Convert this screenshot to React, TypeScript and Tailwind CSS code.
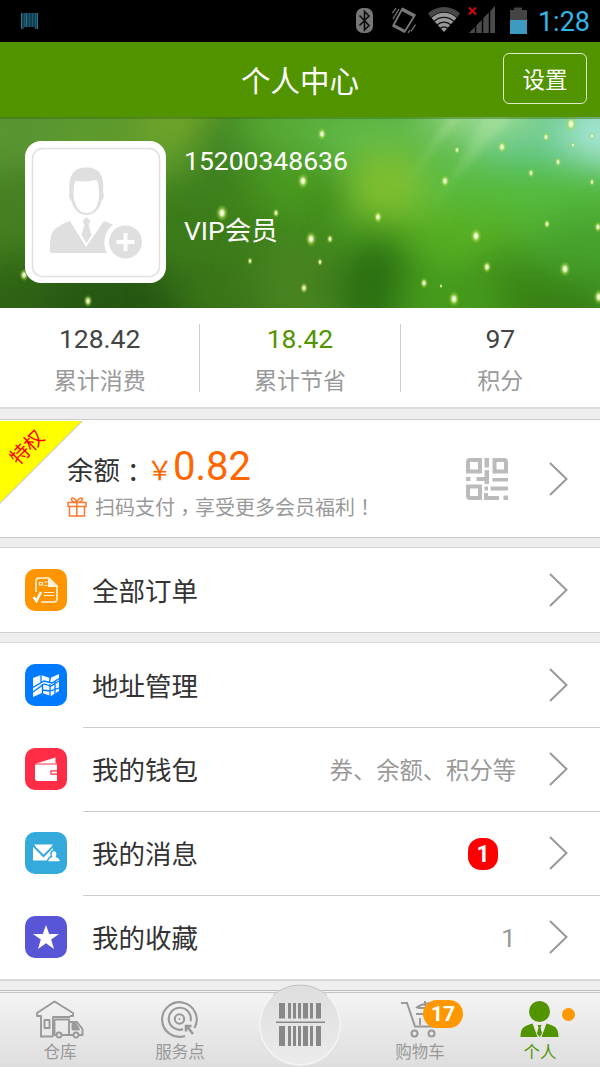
import type { ReactNode } from 'react'

const GLOWS = [
  // x, y, radius
  [322, 17, 4], [303, 64, 5], [378, 100, 4], [445, 64, 4], [502, 30, 4], [571, 7, 5],
  [546, 20, 3], [558, 45, 3], [531, 56, 3], [457, 33, 2.5], [592, 65, 2.5], [547, 107, 3],
  [598, 110, 3.5], [476, 119, 5], [311, 122, 5], [330, 122, 3], [320, 145, 2.5], [222, 96, 5.5],
  [276, 96, 3], [250, 144, 2.5], [487, 150, 4], [565, 152, 5], [424, 166, 3.5], [454, 182, 5],
  [304, 171, 3.5], [88, 184, 4], [24, 158, 4], [599, 180, 5], [441, 169, 1.5], [573, 28, 2], [592, 19, 2],
]

const BLOBS = [
  // x, y, rx, ry, color
  [60, 20, 150, 50, '#5a9633'],
  [20, 100, 60, 40, '#477f22'],
  [40, 190, 120, 50, '#2f6315'],
  [150, 190, 110, 45, '#265713'],
  [200, 110, 60, 40, '#3c7a1a'],
  [125, 25, 70, 35, '#5f9b2c'],
  [180, 2, 40, 24, '#78aa28'],
  [240, 40, 40, 35, '#428427'],
  [245, 95, 45, 40, '#3f801c'],
  [290, 65, 40, 40, '#4a9a20'],
  [310, 8, 75, 34, '#5bad38'],
  [230, 175, 60, 38, '#3c7819'],
  [310, 165, 55, 40, '#4a8422'],
  [480, 65, 120, 75, '#60c04a'],
  [400, 20, 90, 34, '#60bb4c'],
  [570, 25, 95, 50, '#63c88c'],
  [605, 18, 48, 36, '#a9e6d6'],
  [485, -4, 60, 22, '#a9e0a0'],
  [545, 95, 100, 42, '#55bb3e'],
  [440, 125, 95, 40, '#58b024'],
  [385, 70, 36, 38, '#84bf2c'],
  [376, 170, 40, 54, '#2a6d12'],
  [525, 175, 60, 42, '#3f8a19'],
  [590, 135, 55, 40, '#46a02c'],
  [570, 195, 70, 28, '#367d14'],
  [450, 185, 55, 32, '#459a19'],
] as const

function HeroBackground() {
  return (
    <svg viewBox="0 0 600 191" preserveAspectRatio="none" className="absolute inset-0 h-full w-full">
      <defs>
        <filter id="soft" x="-150%" y="-150%" width="400%" height="400%" colorInterpolationFilters="sRGB">
          <feGaussianBlur stdDeviation="20" />
        </filter>
        <filter id="raySoft" colorInterpolationFilters="sRGB">
          <feGaussianBlur stdDeviation="3.500" />
        </filter>
        <radialGradient id="glow">
          <stop offset="0" stopColor="#fbffe6" />
          <stop offset="0.3" stopColor="#f1fbcf" stopOpacity="0.9" />
          <stop offset="0.6" stopColor="#b5e04e" stopOpacity="0.45" />
          <stop offset="1" stopColor="#8fce30" stopOpacity="0" />
        </radialGradient>
        <linearGradient id="ray" x1="0" y1="0" x2="0" y2="1">
          <stop offset="0" stopColor="#d4f5b8" stopOpacity="0.5" />
          <stop offset="1" stopColor="#d4f5b8" stopOpacity="0" />
        </linearGradient>
        <linearGradient id="base">
          <stop offset="0" stopColor="#44801f" />
          <stop offset="0.5" stopColor="#438d20" />
          <stop offset="1" stopColor="#4cad3a" />
        </linearGradient>
      </defs>
      <rect width="600" height="191" fill="url(#base)" />
      {BLOBS.map(([x, y, rx, ry, fill], i) => (
        <ellipse key={i} cx={x} cy={y} rx={rx} ry={ry} fill={fill} filter="url(#soft)" />
      ))}
      <path
        d="M484 0h9L423 113zM450 0h10L400 75zM495 0h18L430 90z"
        fill="url(#ray)"
        opacity="0.55"
        filter="url(#raySoft)"
      />
      {GLOWS.map(([x, y, r], i) => (
        <ellipse key={i} cx={x} cy={y} rx={r * 1.15} ry={r * 1.6} fill="url(#glow)" />
      ))}
      <rect width="600" height="2" fill="#3b6b10" opacity="0.45" />
    </svg>
  )
}

function StatusBar() {
  return (
    <div className="flex h-[42px] items-center bg-black pl-[21px] pr-[10px]">
      <svg width="18" height="18" viewBox="0 0 18 18" className="mt-px">
        <path d="M0 0h17v16H14v-2H3v2H0z" fill="#123f50" />
        <path d="M.5 0v16M5.500 0v14M16.500 0v16" stroke="#2a7996" strokeWidth="1" />
        <path d="M3.500 0v14M8.500 0v14M11.500 0v14M14.500 0v16" stroke="#1d5a70" strokeWidth="1" />
      </svg>
      <svg width="188" height="42" viewBox="350 0 188 42" className="ml-auto">
        <rect x="356" y="8" width="17" height="25" rx="7" fill="#777" />
        <path d="M359.500 15.500l9.500 10-4.500 4.500V11.500l4.500 4.500-9.500 9.500" fill="none" stroke="#111" strokeWidth="1.700" />
        <g fill="none" stroke="#777" strokeWidth="1.800">
          <path d="M402.500 8.500l12.500 6.500-10.500 17-11.500-6z" strokeLinejoin="round" />
          <path d="M392.500 13l3.500-5M393 19l6-10M411 31.500l4.500-7M408 33l2-3" strokeWidth="1.300" />
        </g>
        <path d="M403 8.500l12 6.300-1.500 2.500-12-6.300zM394 24l11 5.800-1.200 2.500-11-5.900z" fill="#777" />
        <path d="M428 13.500a23 23 0 0 1 32 0l-3 4a18 18 0 0 0-26 0z" fill="#484848" />
        <path d="M431.500 18a17.500 17.500 0 0 1 25 0L444 32z" fill="#999" />
        <path d="M434 21.500a14 14 0 0 1 20 0M437 25a10 10 0 0 1 14 0M440 28.500a6 6 0 0 1 8 0" fill="none" stroke="#111" strokeWidth="1.300" />
        <path d="M469 33l26-27v27z" fill="#4b4b4b" />
        <path d="M475.500 24v9M482.500 17v16M489.500 9v24" stroke="#000" strokeWidth="1.500" />
        <path d="M469 7.500l7 7m0-7l-7 7" stroke="#d20a0a" strokeWidth="2" />
        <path d="M510 10h4V7.500h8V10h5v10h-17z" fill="#444" />
        <path d="M510 20h17v14h-17z" fill="#3d9ac0" />
      </svg>
      <span className="pt-0.5 text-[27px] leading-[42px] text-[#33b5e5]">1:28</span>
    </div>
  )
}

function Avatar() {
  return (
    <div className="h-[142px] w-[141px] rounded-2xl bg-white">
      <svg width="141" height="142" viewBox="0 0 141 142">
        <rect x="7.500" y="7.500" width="127" height="128" rx="10" fill="none" stroke="#e0e0e0" strokeWidth="1.500" />
        <g fill="#dfdfdf">
          <path d="M44.500 52C43 34 49 26.500 61.500 26.500S80 34 78 52c1.500 0 1 7-1.500 8C74 70 68 74 61.500 74S49 70 46.500 60c-2.500-1-3-8-2-8z" />
          <path d="M25 112c0-17 1-22 8-26 4-3 8-5 12-6l16 26 18-26c4 1 7 3 9 4-9 6-11 20-6 28z" />
          <path d="M57.500 80l4-4 4 4-2 4 3 10-5 8-5-8 3-10z" />
          <circle cx="100.500" cy="101" r="16.500" />
        </g>
        <path d="M48.500 54c.5-7 0-10 2-14 8 1 14 0 21-1 3 4 2 9 2.500 15-.5 12-5 18-12.500 18s-12-7-13-18z" fill="#fff" />
        <path d="M100.500 92v18M91.500 101h18" stroke="#fff" strokeWidth="4" />
      </svg>
    </div>
  )
}

function Stat({ value, label, active }: { value: string; label: string; active?: boolean }) {
  return (
    <div className="flex flex-1 flex-col items-center pt-3">
      <span className={`text-[26.500px] leading-[38px] ${active ? 'text-[#519400]' : 'text-[#444]'}`}>{value}</span>
      <span className="mt-[7px] text-[23px] leading-[34px] text-[#999]">{label}</span>
    </div>
  )
}

function Chevron() {
  return (
    <svg width="22" height="36" viewBox="0 0 22 36" className="ml-auto shrink-0">
      <path d="M2 2l16.500 16L2 34" fill="none" stroke="#999" strokeWidth="2" />
    </svg>
  )
}

function QrIcon() {
  return (
    <svg width="42" height="42" viewBox="0 0 42 42" fill="#bbb">
      <path fillRule="evenodd" d="M4 0h12v15.500H0V4a4 4 0 0 1 4-4zm0 4v7.500h8V4zM26.500 0H38a4 4 0 0 1 4 4v11.500H26.500zm4 4v7.500h7.500V4zM0 26.500h16V42H4a4 4 0 0 1-4-4zm4 4V38h8v-7.500z" />
      <path d="M18.500 0H23v9.500h-4.500zM18.500 12H23v14h-4.500v-3H10.500v-4h8zM0 19h4.500v4H0zM26.500 20H42v3.500H26.500zM18.500 28.500h3.500v4h-3.500zM24.500 28.500H42v4H24.500zM18 35h4v3h11v4H18zM37.500 37.500H42V42h-4.500z" />
    </svg>
  )
}

function GiftIcon() {
  return (
    <svg width="20" height="20" viewBox="0 0 20 20" fill="none" stroke="#ff7a30" strokeWidth="1.500" className="-mt-0.5">
      <path d="M1 5.500h18v4H1zM2.500 9.500v9.500h15V9.500M9.800 5.500V19M9.800 5.500C7 5.500 3.500 3.500 4.500 1.700 6 0 9 2 9.800 5.500 10.600 2 14 0 15.500 1.700c1 1.800-3 3.800-5.700 3.800" />
    </svg>
  )
}

interface RowProps {
  icon: ReactNode
  color: string
  label: string
  extra?: ReactNode
}

function MenuRow({ icon, color, label, extra }: RowProps) {
  return (
    <div className="flex h-[84px] items-center pl-[25px] pr-[30px]">
      <span className={`h-[42px] w-[42px] shrink-0 rounded-[10px] ${color}`}>
        <svg width="42" height="42" viewBox="0 0 42 42">
          {icon}
        </svg>
      </span>
      <span className="ml-[25px] pt-1 text-[26.500px] leading-[40px] text-[#333]">{label}</span>
      <div className="ml-auto flex items-center">
        {extra}
        <Chevron />
      </div>
    </div>
  )
}

const orderIcon = (
  <g fill="none" stroke="#fff3df" strokeWidth="1.600">
    <path d="M11 23V12q0-3 3-3h10l8 8v13q0 3-3 3H16" />
    <path d="M23 9l9 9h-9z" fill="#fff3df" stroke="none" />
    <path d="M8.500 28l3 4 4.500-9" stroke="#fff" strokeWidth="2.500" />
    <path d="M14.500 13.500h3v2.500h-3zM19.500 13h3M19.500 16.500h3M19 23.500h10M19 26.500h10" strokeWidth="1.200" />
  </g>
)

const mapIcon = (
  <g>
    <path d="M8 14l8-3 9 3 9-4v17l-8 5-9-3-9 4z" fill="#f1f8ff" />
    <path d="M16 10v9M25.500 13l-1 5M7 24l12-7 8 2 8-5M8 28l11-8 7 2 8-5M17.500 20v10M25 20v12M30 17v13M17 26l8 1 9-3" fill="none" stroke="#007aff" strokeWidth="1.300" />
  </g>
)

const walletIcon = (
  <g>
    <path d="M11 15.500l19.500-6v5.500H32V33H12.500q-2.500 0-2.500-2V17z" fill="#fff" />
    <path d="M10 16h22" stroke="#ff2d46" strokeWidth="1" />
    <path d="M32.500 22.800H26v3.400h6.500" fill="none" stroke="#ff2d46" strokeWidth="1.200" />
  </g>
)

const mailIcon = (
  <g>
    <path d="M8 14h20v14.500H8z" fill="#fff" />
    <path d="M8 13.500l10.500 10.500L29 13.500" fill="none" stroke="#34aadc" strokeWidth="2" />
    <path d="M9 12.500h19L18.500 22z" fill="#fff" />
    <path d="M22.500 30c0-4 2-4.500 4-5.500-1.500-3 0-6 2.500-6s4 3 2.500 6c2 1 4 1.500 4 5.500z" fill="#fff" stroke="#34aadc" strokeWidth="1.500" />
  </g>
)

const starIcon = <path d="M21 9l3.200 9H34l-7.800 5.600L29 33l-8-5.700L13 33l2.800-9.400L8 18h9.800z" fill="#fff" />

function Tab({ label, icon, active }: { label: string; icon: ReactNode; active?: boolean }) {
  return (
    <div className="flex w-[120px] flex-col items-center pt-[9px]">
      <svg width="50" height="38" viewBox="0 0 50 38" className="overflow-visible">
        {icon}
      </svg>
      <span className={`mt-[3px] text-[16.500px] leading-[24px] ${active ? 'text-[#519400]' : 'text-[#999]'}`}>
        {label}
      </span>
    </div>
  )
}

const warehouseIcon = (
  <g fill="none" stroke="#999" strokeWidth="1.900" strokeLinejoin="round">
    <path d="M18 36.500H6V16H2v-3L19.500 1.500 38 13v3h-3M18 36.500V17h17" />
    <path d="M9.500 20h5v8h-5z" />
    <path d="M19.500 19.500H34V35h-8M21.500 35h-2V19.500M34 22h8l5.500 7v6H44M39 35h-5" />
    <path d="M37.500 24v5.500h6.500l-3-5.500z" fill="#999" />
    <circle cx="24" cy="35" r="2.500" />
    <circle cx="41" cy="35" r="2.500" />
  </g>
)

const serviceIcon = (
  <g fill="none" stroke="#999" strokeWidth="2.100">
    <path d="M30 35.900A17.300 17.300 0 1 1 39.500 28" />
    <path d="M28 29.300a11 11 0 1 1 7.500-8" />
    <circle cx="24.500" cy="19" r="4.700" />
    <circle cx="24.500" cy="19" r="1" fill="#999" stroke="none" />
    <path d="M38 34l-6-7.500M31 31.500v-5.500h5.500" strokeWidth="2.500" />
  </g>
)

const cartIcon = (
  <g fill="none" stroke="#999" strokeWidth="2">
    <path d="M6 3h6l8 23.500h23" />
    <path d="M21 8q5-4 14-5M30 1v5M23 8h11M21 14h13M25 18v7" />
    <circle cx="19.500" cy="33.500" r="3" />
    <circle cx="36.500" cy="33.500" r="3" />
  </g>
)

const personIcon = (
  <g fill="#519400">
    <circle cx="24.500" cy="11.500" r="10.500" />
    <path d="M5.500 37c0-9 3-11 12-13.500L22.500 37zM43.500 37c0-9-3-11-12-13.500L26.500 37zM22.500 25h4l-1 2.500 1.500 6-2.500 3.500-2.500-3.500 1.500-6z" />
  </g>
)

export default function App() {
  return (
    <div className="flex h-[1067px] w-[600px] flex-col overflow-hidden bg-[#eee] font-[Roboto,'Noto_Sans_CJK_SC',sans-serif] font-normal whitespace-nowrap">
      <StatusBar />

      <header className="flex h-[75px] shrink-0 items-center bg-[#519400] pr-[13px] text-white">
        <span className="w-[84px]" />
        <h1 className="flex-1 pl-[13px] pt-[5px] text-center text-[29.500px] leading-[44px]">个人中心</h1>
        <button className="mb-0.5 h-[51px] w-[84px] rounded-md border border-[#dcebcc] pt-0.5 text-[22.500px] leading-[49px]">
          设置
        </button>
      </header>

      <section className="relative flex h-[191px] shrink-0 overflow-hidden pl-[25px] pt-6">
        <HeroBackground />
        <div className="relative">
          <Avatar />
        </div>
        <div className="relative ml-[18px] text-[26.500px] leading-[40px] text-white">
          <p>15200348636</p>
          <p className="mt-[30px]">VIP会员</p>
        </div>
      </section>

      <section className="flex h-[101px] shrink-0 border-b-2 border-[#ddd] bg-white">
        <Stat value="128.42" label="累计消费" />
        <div className="mt-4 h-[68px] w-px bg-[#ccc]" />
        <Stat value="18.42" label="累计节省" active />
        <div className="mt-4 h-[68px] w-px bg-[#ccc]" />
        <Stat value="97" label="积分" />
      </section>

      <section className="relative mt-[10px] flex h-[119px] shrink-0 items-center border-y border-[#ccc] bg-white pl-[67px] pr-[30px]">
        <svg width="84" height="84" viewBox="0 0 84 84" className="absolute left-0 top-px">
          <path d="M0 0h83L0 83z" fill="#ccc" />
          <path d="M0 0h81.500L0 81.500z" fill="#ff0" />
        </svg>
        <span className="absolute left-[8px] top-[14px] -rotate-45 text-[19.500px] leading-[28px] text-[#f00]">特权</span>
        <div className="pt-[11px]">
          <div className="flex items-baseline leading-[44px]">
            <span className="text-[26.500px] text-[#333]">
              余额<span className="relative top-0.5 font-['Noto_Sans_CJK_TC']">：</span>
            </span>
            <span className="text-[26.500px] leading-none text-[#ff6600]">￥</span>
            <span className="text-[40px] text-[#ff6600]">0.82</span>
          </div>
          <div className="-mt-px flex items-center gap-2 text-[20px] leading-[30px] text-[#999]">
            <GiftIcon />
            <span>
              扫码支付<span className="relative top-[5px] font-['Noto_Sans_CJK_TC']">，</span>享受更多会员福利
              <span className="font-['Noto_Sans_CJK_TC']">！</span>
            </span>
          </div>
        </div>
        <div className="ml-auto flex items-center gap-10">
          <QrIcon />
          <Chevron />
        </div>
      </section>

      <section className="mt-[9px] shrink-0 border-y border-[#d0d0d0] bg-white">
        <MenuRow icon={orderIcon} color="bg-[#ff9500]" label="全部订单" />
      </section>

      <section className="mt-[9px] shrink-0 border-b-2 border-t border-[#d9d9d9] bg-white">
        <MenuRow icon={mapIcon} color="bg-[#007aff]" label="地址管理" />
        <div className="-mb-px ml-[83px] h-px bg-[#ccc]" />
        <MenuRow
          icon={walletIcon}
          color="bg-[#ff2d46]"
          label="我的钱包"
          extra={<span className="mr-8 pt-1 text-[23.300px] leading-[34px] text-[#999]">券、余额、积分等</span>}
        />
        <div className="-mb-px ml-[83px] h-px bg-[#ccc]" />
        <MenuRow
          icon={mailIcon}
          color="bg-[#34aadc]"
          label="我的消息"
          extra={
            <span className="mr-[50px] mt-px h-8 w-[30px] rounded-[13px] bg-[#f00] text-center text-[23px] font-bold leading-[33px] text-white">
              1
            </span>
          }
        />
        <div className="-mb-px ml-[83px] h-px bg-[#ccc]" />
        <MenuRow
          icon={starIcon}
          color="bg-[#5856d6]"
          label="我的收藏"
          extra={<span className="mr-8 pt-0.5 text-[26.500px] leading-[38px] text-[#999]">1</span>}
        />
      </section>

      <nav className="relative mt-auto flex h-[77px] shrink-0 border-t border-[#bbb] bg-linear-to-b from-[#f4f4f4] to-[#dedede]">
        <div className="absolute inset-x-0 top-px h-px bg-[#c4c4c4]" />
        <Tab label="仓库" icon={warehouseIcon} />
        <Tab label="服务点" icon={serviceIcon} />
        <div className="relative w-[120px]">
          <svg width="84" height="84" viewBox="0 0 84 84" className="absolute -top-[8px] left-[18px]">
            <defs>
              <linearGradient id="scan" x1="0" y1="0" x2="0" y2="1">
                <stop offset="0" stopColor="#dedede" />
                <stop offset="1" stopColor="#ebebeb" />
              </linearGradient>
            </defs>
            <circle cx="42" cy="42" r="40" fill="url(#scan)" stroke="#f4f4f4" strokeWidth="1.500" />
            <path d="M15 12.500A40 40 0 0 1 69 12.500" fill="none" stroke="#bbb" />
            <path d="M21 20h6v15.500h-6zM30 20h3v15.500h-3zM35 20h3v15.500h-3zM40 20h3v15.500h-3zM45 20h5v15.500h-5zM52 20h3v15.500h-3zM58 20h5v15.500h-5zM21 43h6v20h-6zM30 43h3v20h-3zM35 43h3v20h-3zM40 43h3v20h-3zM45 43h5v20h-5zM52 43h3v20h-3zM58 43h5v20h-5zM18 38.500h49V40H18z" fill="#888" />
          </svg>
        </div>
        <div className="relative">
          <Tab label="购物车" icon={cartIcon} />
          <span className="absolute left-[63px] top-[9px] h-7 w-10 rounded-full bg-[#ff9800] text-center text-[21px] font-bold leading-[29px] text-white">
            17
          </span>
        </div>
        <div className="relative">
          <Tab label="个人" icon={personIcon} active />
          <span className="absolute left-[82px] top-[17px] h-[13px] w-[13px] rounded-full bg-[#ff9800]" />
        </div>
      </nav>
    </div>
  )
}
